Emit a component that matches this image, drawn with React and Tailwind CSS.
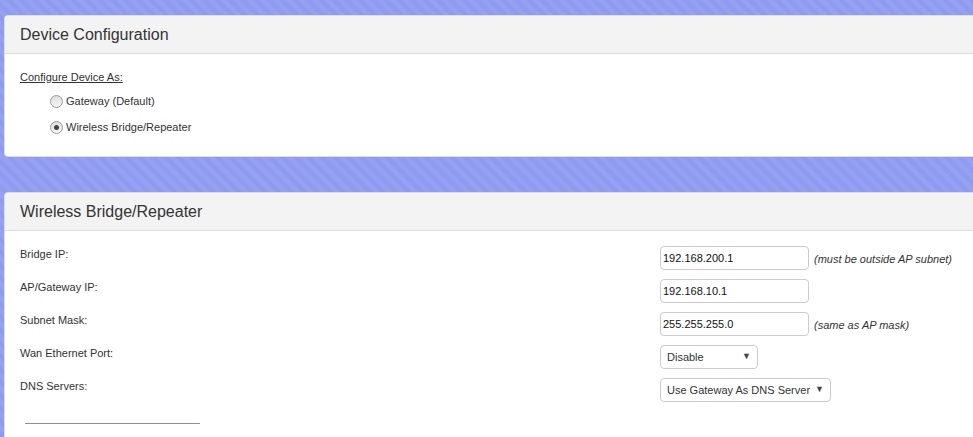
import { useState } from 'react';

function Radio({ checked, label, onClick }) {
	return (
		<div className="flex items-center h-[26px] cursor-pointer" onClick={onClick}>
			<span className="w-[13px] h-[13px] rounded-full border border-[#9a9a9a] bg-[linear-gradient(#dcdcdc,#f8f8f8)] flex items-center justify-center">
				{checked && <span className="w-[5px] h-[5px] rounded-full bg-[#444]" />}
			</span>
			<span className="ml-[3px] text-[11px] text-[#333]">{label}</span>
		</div>
	);
}

function TextBox({ value }) {
	return (
		<input
			defaultValue={value}
			className="w-[149px] h-[24px] border border-[#ccc] rounded-[4px] px-[2px] text-[11px] text-[#111] bg-white outline-none"
		/>
	);
}

function SelectBox({ value, width }) {
	return (
		<div className={`${width} h-[24px] border border-[#ccc] rounded-[4px] flex items-center justify-between pl-[6px] pr-[6px] bg-white text-[11px] text-[#333] whitespace-nowrap`}>
			<span>{value}</span>
			<span className="text-[9px] text-[#444]">▼</span>
		</div>
	);
}

function Panel({ title, children }) {
	return (
		<div className="ml-[4px] mr-[-30px] bg-white border border-[#ddd] rounded-[4px] overflow-hidden">
			<div className="h-[38px] bg-[#f3f3f3] border-b border-[#ddd] flex items-center px-[15px] text-[16px] text-[#333]">
				{title}
			</div>
			{children}
		</div>
	);
}

export default function App() {
	const [mode, setMode] = useState('bridge');

	const rows = [
		{ label: 'Bridge IP:', field: <TextBox value="192.168.200.1" />, note: '(must be outside AP subnet)' },
		{ label: 'AP/Gateway IP:', field: <TextBox value="192.168.10.1" /> },
		{ label: 'Subnet Mask:', field: <TextBox value="255.255.255.0" />, note: '(same as AP mask)' },
		{ label: 'Wan Ethernet Port:', field: <SelectBox value="Disable" width="w-[98px]" /> },
		{ label: 'DNS Servers:', field: <SelectBox value="Use Gateway As DNS Server" width="w-[171px]" /> }
	];

	return (
		<div
			className="w-[973px] h-[437px] overflow-hidden pt-[15px] font-['Liberation_Sans',Arial,sans-serif] bg-[repeating-linear-gradient(45deg,#8e9bf0_0px,#8e9bf0_4.6px,#96a2f1_4.6px,#96a2f1_9.2px)]"
		>
			<Panel title="Device Configuration">
				<div className="pt-[16px] pb-[16px] px-[15px]">
					<div className="text-[11px] text-[#333] underline h-[14px] leading-[14px]">Configure Device As:</div>
					<div className="mt-[4px] pl-[30px]">
						<Radio checked={mode === 'gateway'} label="Gateway (Default)" onClick={() => setMode('gateway')} />
						<Radio checked={mode === 'bridge'} label="Wireless Bridge/Repeater" onClick={() => setMode('bridge')} />
					</div>
				</div>
			</Panel>

			<div className="h-[35px]" />

			<Panel title="Wireless Bridge/Repeater">
				<div className="pt-[15px] px-[15px] pb-[20px]">
					{rows.map((row) => (
						<div key={row.label} className="flex items-start h-[33px]">
							<div className="w-[640px] text-[11px] text-[#333]">{row.label}</div>
							{row.field}
							{row.note && (
								<span className="ml-[5px] mt-[5px] text-[11px] italic text-[#333]">{row.note}</span>
							)}
						</div>
					))}
					<div className="mt-[12px] ml-[5px] w-[175px] border-t border-[#8c8cae]" />
				</div>
			</Panel>
		</div>
	);
}
